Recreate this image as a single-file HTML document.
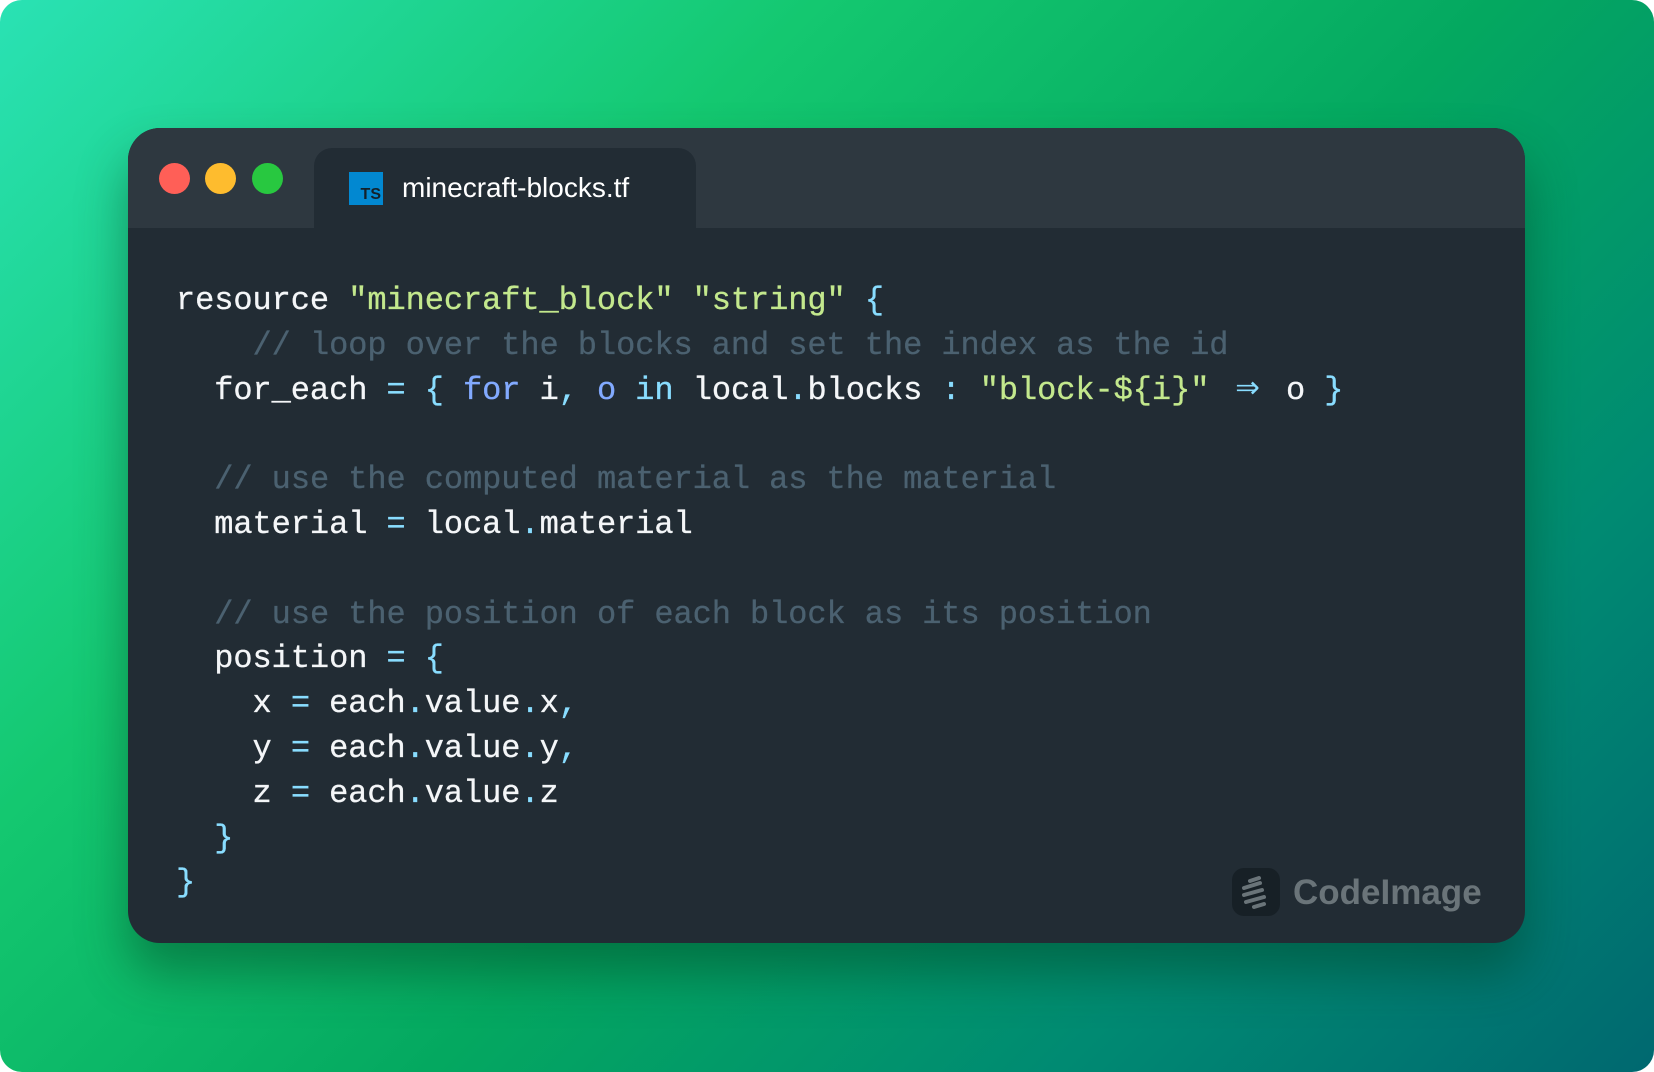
<!DOCTYPE html>
<html><head><meta charset="utf-8"><style>
html,body{margin:0;padding:0;width:1654px;height:1072px;background:#fff;overflow:hidden}
.bg{position:absolute;left:0;top:0;width:1654px;height:1072px;border-radius:22px;background:linear-gradient(135deg,#2ae2b4 0%,#14c870 30%,#04a860 55%,#008a72 78%,#006870 100%)}
.win{position:absolute;left:128px;top:128px;width:1397px;height:815px;border-radius:32px;background:#222c34;overflow:hidden;box-shadow:0 30px 50px rgba(0,60,30,.45)}
.title{position:absolute;left:0;top:0;width:100%;height:100px;background:#2e3840}
.tab{position:absolute;left:186px;top:20px;width:382px;height:90px;background:#222c34;border-radius:18px 18px 0 0}
.dot{position:absolute;top:35px;width:31px;height:31px;border-radius:50%}
.ts{position:absolute;left:221px;top:44px;width:34px;height:33px;background:#0288d1;color:#14202a;font:bold 16px "Liberation Sans",sans-serif}
.ts span{position:absolute;right:2px;bottom:1px}
.fn{position:absolute;left:274px;top:44px;font:28px "Liberation Sans",sans-serif;color:#fff;letter-spacing:0px}
pre{position:absolute;left:48px;top:151px;margin:0;font:32px/44.8px "Liberation Mono",monospace;color:#f4f6f8;letter-spacing:-0.07px;-webkit-text-stroke:0.3px}
.s{color:#c3e88d}.p{color:#89ddff}.k{color:#82aaff}.c{color:#4b6170}
.ar{display:inline-block;width:38.4px;text-align:center;color:#89ddff;font-size:40px;line-height:30px;letter-spacing:0;-webkit-text-stroke:0;overflow:visible}
.logo{position:absolute;left:1104px;top:740px;width:48px;height:48px;border-radius:12px;background:#172026}
.lt{position:absolute;left:1165px;top:745px;font:bold 35px "Liberation Sans",sans-serif;color:#6a7479}
</style></head><body>
<div class="bg"></div>
<div class="win">
<div class="title"></div>
<div class="tab"></div>
<div class="dot" style="left:31px;background:#ff5f57"></div>
<div class="dot" style="left:77px;background:#febc2e"></div>
<div class="dot" style="left:124px;background:#28c840"></div>
<div class="ts"><span>TS</span></div>
<div class="fn">minecraft-blocks.tf</div>
<pre>resource <span class="s">"minecraft_block"</span> <span class="s">"string"</span> <span class="p">{</span>
    <span class="c">// loop over the blocks and set the index as the id</span>
  for_each <span class="p">=</span> <span class="p">{</span> <span class="k">for</span> i<span class="p">,</span> <span class="k">o</span> <span class="p">in</span> local<span class="p">.</span>blocks <span class="p">:</span> <span class="s">"block-${i}"</span> <span class="ar">⇒</span> o <span class="p">}</span>

  <span class="c">// use the computed material as the material</span>
  material <span class="p">=</span> local<span class="p">.</span>material

  <span class="c">// use the position of each block as its position</span>
  position <span class="p">=</span> <span class="p">{</span>
    x <span class="p">=</span> each<span class="p">.</span>value<span class="p">.</span>x<span class="p">,</span>
    y <span class="p">=</span> each<span class="p">.</span>value<span class="p">.</span>y<span class="p">,</span>
    z <span class="p">=</span> each<span class="p">.</span>value<span class="p">.</span>z
  <span class="p">}</span>
<span class="p">}</span></pre>
<div class="logo"><svg width="48" height="48" viewBox="0 0 48 48"><g stroke="#6a7479" stroke-width="4" stroke-linecap="round"><line x1="18" y1="13" x2="27" y2="10"/><line x1="12" y1="20" x2="28" y2="15"/><line x1="12" y1="27" x2="30" y2="22"/><line x1="14" y1="34" x2="32" y2="29"/><line x1="22" y1="39" x2="32" y2="36"/></g></svg></div>
<div class="lt">CodeImage</div>
</div>
</body></html>
